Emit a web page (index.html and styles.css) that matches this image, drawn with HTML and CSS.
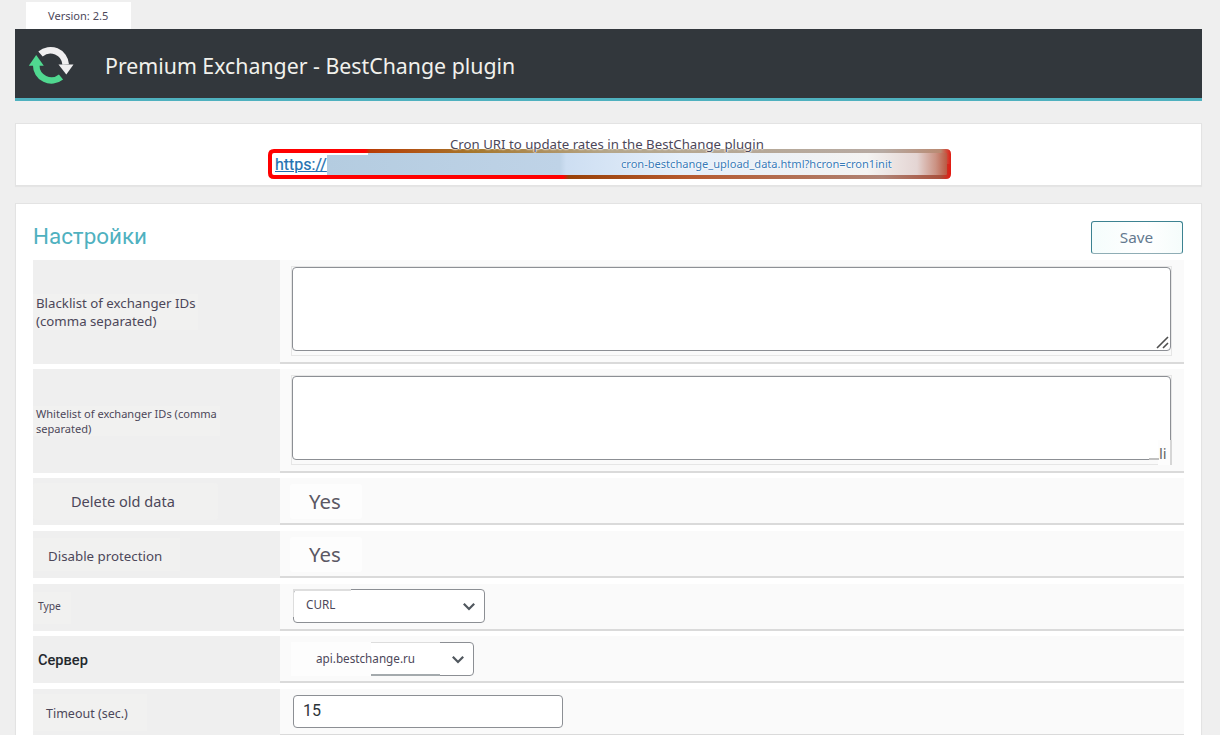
FILE: index.html
```html
<!DOCTYPE html>
<html lang="en">
<head>
<meta charset="utf-8">
<title>Premium Exchanger - BestChange plugin</title>
<link rel="stylesheet" href="styles.css">
</head>
<body>
<div class="version"><span>Version: 2.5</span></div>
<header class="header">
  <svg class="logo" width="46" height="40" viewBox="0 0 46 40">
    <path d="M12.500 8A15.200 15.200 0 0 1 37.700 18.500" fill="none" stroke="#f0eff0" stroke-width="6.600"/>
    <path d="M30.500 18.500h15l-7.200 10z" fill="#f0eff0"/>
    <path d="M8.200 19A15.200 15.200 0 0 0 33 31" fill="none" stroke="#50d890" stroke-width="6.600"/>
    <path d="M.8 19.700h15L8.200 8.900z" fill="#50d890"/>
  </svg>
  <h1 class="title">Premium Exchanger - BestChange plugin</h1>
</header>
<section class="card cron">
  <div class="cron-title">Cron URI to update rates in the BestChange plugin</div>
  <div class="url">
    <svg class="url-frame" width="683" height="31" viewBox="0 0 683 31">
      <defs>
        <linearGradient id="fade"><stop offset="0" stop-color="#b4cce0"/><stop offset=".375" stop-color="#bfd3e7"/><stop offset=".385" stop-color="#cddef2"/><stop offset=".57" stop-color="#e5effa"/><stop offset=".87" stop-color="#f4f3f2"/><stop offset=".95" stop-color="#e4d5d3"/><stop offset=".98" stop-color="#cb9384"/><stop offset="1" stop-color="#b8543c"/></linearGradient>
        <linearGradient id="top" gradientUnits="userSpaceOnUse" x1="0" y1="0" x2="683" y2="0"><stop offset="0" stop-color="red"/><stop offset=".142" stop-color="red"/><stop offset=".15" stop-color="#b83c05"/><stop offset=".3" stop-color="#a6772c"/><stop offset=".5" stop-color="#b5a78c"/><stop offset=".9" stop-color="#b7aaa3"/><stop offset=".985" stop-color="#b98a72"/><stop offset="1" stop-color="#e01c12"/></linearGradient>
        <linearGradient id="bottom" gradientUnits="userSpaceOnUse" x1="0" y1="0" x2="683" y2="0"><stop offset="0" stop-color="red"/><stop offset=".432" stop-color="red"/><stop offset=".44" stop-color="#984008"/><stop offset=".62" stop-color="#b65b31"/><stop offset=".9" stop-color="#af8375"/><stop offset=".985" stop-color="#a9503c"/><stop offset="1" stop-color="#e61810"/></linearGradient>
      </defs>
      <path d="M59 3H680v24H59z" fill="url(#fade)"/>
      <path d="M2 16V6q0-4 4-4H678q3 0 3 3v11" fill="none" stroke="url(#top)" stroke-width="4"/>
      <path d="M2 15v9q0 4 4 4H678q3 0 3-3v-10" fill="none" stroke="url(#bottom)" stroke-width="4"/>
      <path d="M59 4h41v2H59z" fill="#fff"/>
    </svg>
    <a class="url-start">https://</a>
    <a class="url-end">cron-bestchange_upload_data.html?hcron=cron1init</a>
  </div>
</section>
<main class="card settings">
  <div class="settings-head"><h2 class="heading">Настройки</h2><div class="save">Save</div></div>
  <div class="row tall">
    <div class="label"><span class="patch blacklist">Blacklist of exchanger IDs<br>(comma separated)</span></div>
    <div class="field"><div class="frame"><div class="area">
      <svg class="grip" width="13" height="13" viewBox="0 0 13 13"><path d="M1 12L12 1M7 12l5-5" stroke="#505050" stroke-width="1.600" fill="none"/></svg>
    </div></div></div>
  </div>
  <div class="row tall">
    <div class="label"><span class="patch whitelist">Whitelist of exchanger IDs (comma<br>separated)</span></div>
    <div class="field"><div class="frame"><div class="area"><span class="corner"><span class="corner-line"></span>li</span></div></div></div>
  </div>
  <div class="row gap-lg">
    <div class="label"><span class="patch delete">Delete old data</span></div>
    <div class="field"><span class="yes">Yes</span></div>
  </div>
  <div class="row gap-lg">
    <div class="label"><span class="patch disable">Disable protection</span></div>
    <div class="field"><span class="yes">Yes</span></div>
  </div>
  <div class="row">
    <div class="label"><span class="patch type">Type</span></div>
    <div class="field"><div class="select curl"><span>CURL</span>
      <svg width="14" height="10" viewBox="0 0 14 10"><path d="M1.800 1.800L7 7l5.200-5.200" fill="none" stroke="#50575e" stroke-width="2.200"/></svg></div></div>
  </div>
  <div class="row gap-lg">
    <div class="label"><span class="server">Сервер</span></div>
    <div class="field"><div class="select api"><span>api.bestchange.ru</span>
      <svg width="14" height="10" viewBox="0 0 14 10"><path d="M1.800 1.800L7 7l5.200-5.200" fill="none" stroke="#50575e" stroke-width="2.200"/></svg></div></div>
  </div>
  <div class="row">
    <div class="label"><span class="patch timeout">Timeout (sec.)</span></div>
    <div class="field"><div class="input">15</div></div>
  </div>
</main>
</body>
</html>
```
FILE: styles.css
```css
*, *::before, *::after { box-sizing: border-box; }
body {
  margin: 0;
  height: 735px;
  overflow: hidden;
  padding: 2px 18px 0 15px;
  background: #efefef;
  color: #4c4759;
  font-family: "Noto Sans", sans-serif;
}
.version {
  width: 105px;
  height: 27px;
  margin-left: 11px;
  padding-left: 22px;
  background: #fff;
  font-size: 11.050px;
  line-height: 28px;
  white-space: nowrap;
}
.header {
  display: flex;
  height: 72px;
  padding-left: 13px;
  background: #32373c;
  border-bottom: 3px solid #4fb1bf;
}
.logo { margin-top: 17px; }
.title {
  margin: 0 0 0 31px;
  font-size: 21.320px;
  font-weight: 400;
  line-height: 73px;
  white-space: nowrap;
  color: #f1f1ec;
}
.card {
  background: #fff;
  border: 1px solid #e3e3e3;
  box-shadow: 0 1px 1px rgba(0, 0, 0, .04);
}
.cron {
  display: flex;
  flex-direction: column;
  height: 63px;
  margin-top: 22px;
  padding: 12px 0 0 252px;
}
.cron-title {
  position: relative;
  z-index: 1;
  height: 13px;
  margin-left: 182px;
  font-size: 13.230px;
  line-height: 17px;
  white-space: nowrap;
  text-shadow: 0 0 1px #fff, 0 0 1px #fff, 0 0 2px #fff, 0 0 2px #fff, 0 0 2px #fff;
}
.url {
  position: relative;
  display: flex;
  width: 683px;
  height: 31px;
  line-height: 31px;
  white-space: nowrap;
}
.url-frame { position: absolute; left: 0; top: 0; }
.url-start {
  position: relative;
  width: 346px;
  margin-left: 7px;
  font-family: Roboto, sans-serif;
  font-size: 16px;
  line-height: 32px;
  color: #2271b1;
  -webkit-text-stroke: .2px #2271b1;
  text-decoration: underline;
}
.url-end {
  position: relative;
  font-size: 11.070px;
  line-height: 30px;
  color: #3679b7;
  text-shadow: 0 0 1px #fff, 0 0 2px #fff, 0 0 2px #fff;
}
.settings { height: 560px; margin-top: 17px; padding: 0 17px; }
.settings-head {
  display: flex;
  justify-content: space-between;
  height: 56px;
}
.heading {
  margin: 0;
  font-family: Roboto, sans-serif;
  font-size: 22.400px;
  font-weight: 400;
  line-height: 64px;
  color: #4fb1bf;
}
.save {
  width: 92px;
  height: 33px;
  margin: 17px 1px 0 0;
  padding-right: 1px;
  border: 1px solid #3c8291;
  border-radius: 3px;
  background: linear-gradient(90deg, #f5fdfc, #fcfefe 40%, #fff 60%, #f5fcfb);
  border-bottom-color: #8fadb5;
  font-size: 15.300px;
  line-height: 31px;
  text-align: center;
  color: #64798f;
}
.row { display: flex; height: 47px; margin-bottom: 5px; }
.gap-lg { margin-bottom: 6px; }
.tall { height: 104px; }
.label {
  display: flex;
  align-items: center;
  width: 247px;
  background: #efefef;
}
.field {
  flex: 1;
  padding: 6px 0 0 13px;
  background: #fafafa;
  border-bottom: 2px solid #dadada;
}
.patch { white-space: nowrap; background: #f1f1f0; }
.blacklist { padding: 0 2px 0 3px; font-size: 13.250px; line-height: 18px; }
.whitelist { padding: 0 3px; font-size: 11.050px; line-height: 15px; }
.delete { width: 185px; padding: 6px 0 7px 38px; border-radius: 4px; font-size: 14.550px; line-height: 24px; }
.disable { width: 147px; padding: 6px 0 3px 15px; font-size: 13.300px; line-height: 24px; }
.type { width: 38px; padding: 2px 0 6px 5px; font-size: 10.300px; line-height: 24px; }
.server {
  padding: 1px 0 0 5px;
  font-family: Roboto, sans-serif;
  font-size: 14.600px;
  font-weight: 500;
  color: #23282d;
}
.timeout { width: 114px; padding: 7px 0 4px 13px; font-size: 12.500px; line-height: 26px; }
.frame {
  width: 881px;
  height: 90px;
  margin-left: -2px;
  border: 1px solid #e6e6e6;
}
.area {
  position: relative;
  width: 879px;
  height: 84px;
  background: #fff;
  border: 1px solid #8c8f94;
  border-radius: 4px;
}
.grip { position: absolute; right: 1px; bottom: 1px; }
.corner {
  position: absolute;
  right: -2px;
  bottom: -6px;
  width: 23px;
  height: 25px;
  padding-left: 10px;
  background: linear-gradient(90deg, transparent 45%, #fdfdfd 45%);
  border-right: 2px solid #d6d6d6;
  font-size: 15px;
  line-height: 26px;
  color: #666;
}
.corner-line { position: absolute; left: 0; bottom: 5px; width: 10px; height: 2px; background: #c0c0c0; }
.yes {
  display: block;
  width: 72px;
  height: 35px;
  margin-left: -3px;
  padding-left: 19px;
  background: #fdfdfd;
  border-radius: 3px;
  font-size: 20.400px;
  line-height: 34px;
  color: #5b5864;
}
.select {
  position: relative;
  display: flex;
  justify-content: space-between;
  width: 192px;
  height: 34px;
  margin-top: -1px;
  padding: 0 8px 0 12px;
  background: #fff;
  border: 1px solid #8c8f94;
  border-radius: 4px;
  font-size: 11.700px;
  line-height: 29px;
}
.select svg { margin-top: 12px; }
.curl::before {
  content: "";
  position: absolute;
  left: -1px;
  top: -1px;
  width: 58px;
  height: 28px;
  border-top: 2px solid #dedede;
  border-left: 1px solid #ddd;
}
.api {
  width: 181px;
  margin-top: 0;
  padding-left: 22px;
  line-height: 31px;
}
.api::before {
  content: "";
  position: absolute;
  left: -3px;
  top: -1px;
  width: 80px;
  height: 34px;
  background: #fdfdfd;
}
.api::after {
  content: "";
  position: absolute;
  left: 77px;
  top: -1px;
  width: 69px;
  height: 34px;
  border-top: 1px solid #ddd;
  border-bottom: 2px solid #a4aaad;
}
.api span { position: relative; }
.input {
  width: 270px;
  height: 33px;
  padding-left: 9px;
  background: #fff;
  border: 1px solid #8c8f94;
  border-radius: 4px;
  font-family: Roboto, sans-serif;
  font-size: 16px;
  line-height: 30px;
  color: #2c3338;
}
```
